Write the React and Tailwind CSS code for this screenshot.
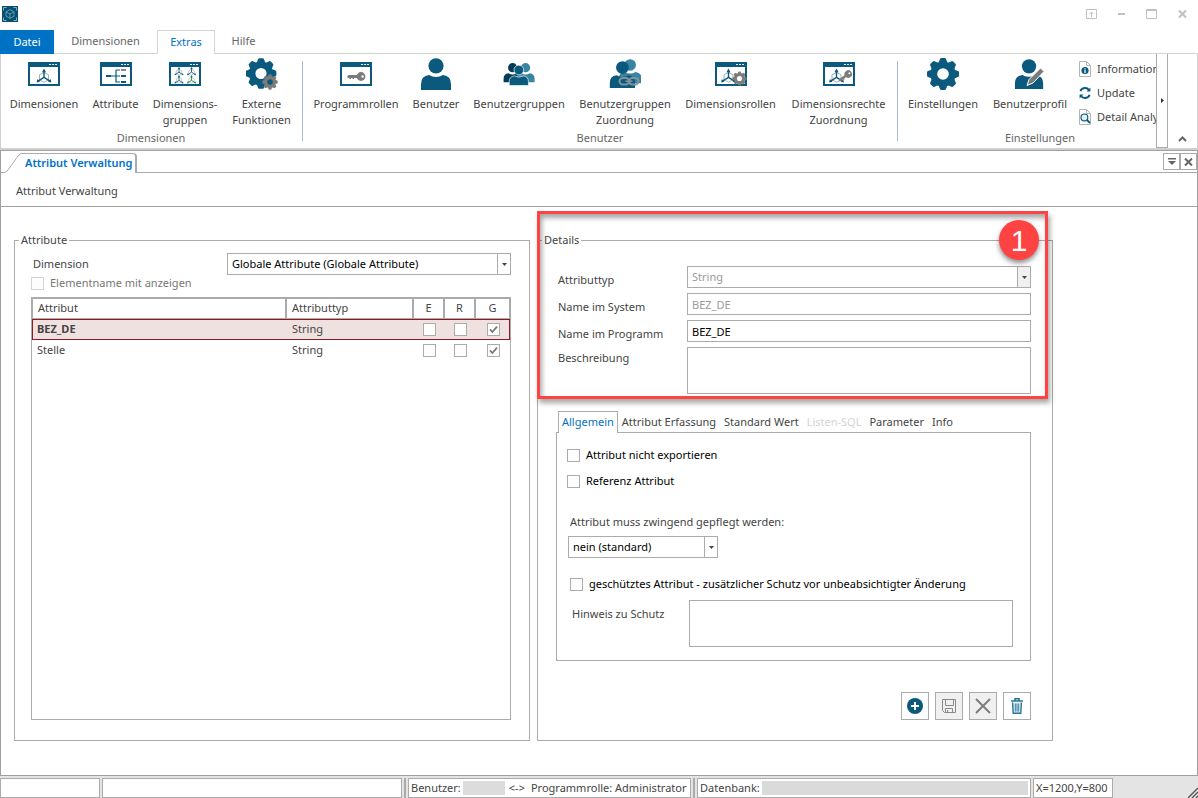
import { useState } from 'react'

const ATTRIBUTES = [
  { id: 1, name: 'BEZ_DE', type: 'String', e: false, r: false, g: true },
  { id: 2, name: 'Stelle', type: 'String', e: false, r: false, g: true },
]

const DETAIL_TABS = [
  { label: 'Allgemein' },
  { label: 'Attribut Erfassung' },
  { label: 'Standard Wert' },
  { label: 'Listen-SQL', disabled: true },
  { label: 'Parameter' },
  { label: 'Info' },
]

const TEETH = [0, 45, 90, 135, 180, 225, 270, 315]

// ---------- icons ----------

function Gear({ cx, cy, scale = 1, color = '#0b5a7e', hole = '#fff' }) {
  return (
    <g transform={`translate(${cx} ${cy}) scale(${scale})`} fill={color}>
      <circle r="12.6" />
      {TEETH.map((deg) => (
        <path key={deg} d="M-4.6 -11 L-3 -15 Q-2.7 -16 -1.6 -16 H1.6 Q2.7 -16 3 -15 L4.6 -11 Z" transform={`rotate(${deg})`} />
      ))}
      <circle r="5.8" fill={hole} />
    </g>
  )
}

function Axes({ x = 0, y = 0, scale = 1, color = '#0b5a7e' }) {
  return (
    <g transform={`translate(${x} ${y}) scale(${scale})`} fill="none">
      <path d="M0 -4 L4.5 -1.6 V3.4 L0 5.8 L-4.5 3.4 V-1.6 Z" stroke="#8c9aa0" strokeWidth="0.8" />
      <path d="M0 -6 V1 L-6 4.8 M0 1 L6 4.8" stroke={color} strokeWidth="1.4" />
      <path d="M-2 -4.2 L0 -7.8 L2 -4.2 Z M-7.4 6 L-6.6 2.6 L-4 5.4 Z M7.4 6 L6.6 2.6 L4 5.4 Z" fill={color} />
    </g>
  )
}

function Key({ x, y, rotate = 0, scale = 1 }) {
  return (
    <g transform={`translate(${x} ${y}) rotate(${rotate}) scale(${scale})`} fill="#7b7b7b">
      <path d="M-9.5 -.4 L-8.5 -1.4 H1 V1.4 H-3 V2.6 H-4.5 V1.4 H-6 V2.6 H-7.5 V1.4 H-9.5 Z" />
      <circle cx="4" cy="0" r="4.4" />
      <circle cx="5.6" cy="0" r="1.2" fill="#fff" />
    </g>
  )
}

function Icon({ children }) {
  return (
    <svg viewBox="0 0 32 32" className="h-8 w-8" aria-hidden="true">
      {children}
    </svg>
  )
}

function WindowFrame({ children }) {
  return (
    <Icon>
      <rect x="0" y="4" width="32" height="24" fill="#0b5a7e" />
      <rect x="2" y="9" width="28" height="17" fill="#fff" />
      <path d="M21 6h2v1h-2zM24 6h2v1h-2zM27 6h2v1h-2z" fill="#dfeaef" />
      {children}
    </Icon>
  )
}

function Person({ x = 0, y = 0, scale = 1, color = '#0b5a7e', outline = 'none' }) {
  return (
    <g transform={`translate(${x} ${y}) scale(${scale})`} fill={color} stroke={outline} strokeWidth="1">
      <circle cx="16" cy="7.8" r="7.6" />
      <path d="M1 32 V26 Q1 18 9 17 Q16 21 23 17 Q31 18 31 26 V32 Z" />
    </g>
  )
}

const ICONS = {
  dimension: <WindowFrame><Axes x={16} y={18.4} /></WindowFrame>,
  attribute: (
    <WindowFrame>
      <path d="M11 18H20M16 12V24.6M16 12H20M16 24H20" stroke="#0b5a7e" strokeWidth="1.2" fill="none" />
      <path d="M6 18H11M21 18H26M21 24H26" stroke="#0b5a7e" strokeWidth="2" />
      <path d="M21 12H26" stroke="#8a8a8a" strokeWidth="2" />
    </WindowFrame>
  ),
  groups: (
    <WindowFrame>
      <Axes x={10} y={13.6} scale={0.6} />
      <Axes x={22.5} y={13.6} scale={0.6} />
      <Axes x={10} y={21.8} scale={0.6} />
      <Axes x={22.5} y={21.8} scale={0.6} color="#1f7a4d" />
    </WindowFrame>
  ),
  external: (
    <Icon>
      <Gear cx={15} cy={15.5} scale={0.96} />
      <Gear cx={24} cy={24} scale={0.48} color="#7b7b7b" hole="#0b5a7e" />
    </Icon>
  ),
  key: <WindowFrame><Key x={17} y={18.5} /></WindowFrame>,
  user: <Icon><Person /></Icon>,
  users: (
    <Icon>
      <Person x={0} y={5} scale={0.6} color="#053c55" />
      <Person x={13} y={5} scale={0.6} color="#3a84a3" />
      <Person x={5.6} y={7} scale={0.64} color="#0b5a7e" outline="#fff" />
    </Icon>
  ),
  userLink: (
    <Icon>
      <Person x={9} y={1} scale={0.76} color="#3a84a3" />
      <Person x={0} y={3} scale={0.84} color="#0b5a7e" />
      <g fill="none" stroke="#84929a" strokeWidth="2">
        <rect x="10.5" y="20" width="9.5" height="6.4" rx="3.2" />
        <rect x="20" y="20" width="9.5" height="6.4" rx="3.2" />
      </g>
      <path d="M16.5 23.2H23.5" stroke="#84929a" strokeWidth="1.6" />
    </Icon>
  ),
  dimensionRoles: (
    <WindowFrame>
      <Axes x={13.5} y={18.4} />
      <Gear cx={24.5} cy={20.5} scale={0.44} color="#7b7b7b" />
    </WindowFrame>
  ),
  dimensionRights: (
    <WindowFrame>
      <Axes x={13.5} y={18.4} />
      <Key x={22.5} y={18} rotate={-35} scale={0.85} />
    </WindowFrame>
  ),
  settings: <Icon><Gear cx={16} cy={16} /></Icon>,
  profile: (
    <Icon>
      <Person x={0} y={1} scale={0.94} />
      <path d="M13 27.5 L15 21.5 L26.5 10 L30 13.5 L19 25 Z" fill="#7b7b7b" stroke="#fff" strokeWidth="1" />
    </Icon>
  ),
}

function InfoPageIcon() {
  return (
    <svg viewBox="0 0 16 16" className="h-4 w-4" aria-hidden="true">
      <path d="M2.5 .5H9.5L13.5 4.5V15.5H2.5Z" fill="#fff" stroke="#b4b4b4" />
      <path d="M9.5 .5V4.5H13.5" fill="none" stroke="#b4b4b4" />
      <circle cx="8" cy="9.5" r="3.6" fill="#0b5a7e" />
      <path d="M8 7.2v1.2M8 9v3" stroke="#fff" strokeWidth="1.2" />
    </svg>
  )
}

function RefreshIcon() {
  return (
    <svg viewBox="0 0 16 16" className="h-4 w-4" aria-hidden="true">
      <path d="M3.4 6.2 A5 5 0 0 1 12 5 M12.6 9.8 A5 5 0 0 1 4 11" fill="none" stroke="#0b5a7e" strokeWidth="2" />
      <path d="M13.4 2.6V6.6H9.6ZM2.6 13.4V9.4H6.4Z" fill="#0b5a7e" />
    </svg>
  )
}

function SearchPageIcon() {
  return (
    <svg viewBox="0 0 16 16" className="h-4 w-4" aria-hidden="true">
      <path d="M2.5 .5H9.5L13.5 4.5V15.5H2.5Z" fill="#fff" stroke="#b4b4b4" />
      <path d="M9.5 .5V4.5H13.5" fill="none" stroke="#b4b4b4" />
      <circle cx="7.4" cy="8.4" r="3.4" fill="#e3eff5" stroke="#0b5a7e" strokeWidth="1.2" />
      <path d="M10 11 L13 14" stroke="#0b5a7e" strokeWidth="1.8" />
    </svg>
  )
}

// ---------- form controls ----------

function Checkbox({ id, checked = false, disabled, label }) {
  return (
    <span className="relative inline-block h-[13px] w-[13px] shrink-0 align-middle">
      <input
        id={id}
        type="checkbox"
        aria-label={label}
        defaultChecked={checked}
        disabled={disabled}
        className="peer block h-[13px] w-[13px] appearance-none border border-[#ababab] bg-[#fdfdfd] disabled:border-[#d4d4d4]"
      />
      <svg viewBox="0 0 13 13" className="pointer-events-none absolute inset-0 hidden peer-checked:block" aria-hidden="true">
        <path d="M3 6.4 L5.4 9 L10 3.6" fill="none" stroke="#7a7a7a" strokeWidth="1.8" />
      </svg>
    </span>
  )
}

function Select({ id, options, disabled, className = '' }) {
  return (
    <div className={`flex h-[22px] border border-[#ababab] bg-white ${className}`}>
      <select
        id={id}
        disabled={disabled}
        className="min-w-0 flex-1 appearance-none bg-white pl-1 text-black outline-none disabled:text-[#9a9a9a] disabled:opacity-100"
      >
        {options.map((o) => <option key={o}>{o}</option>)}
      </select>
      <span className={`pointer-events-none flex w-[13px] items-center justify-center border-l border-[#ababab] ${disabled ? 'bg-[#f0f0f0]' : ''}`}>
        <svg viewBox="0 0 5 3" className="h-[3px] w-[5px]" aria-hidden="true"><path d="M0 0H5L2.5 3Z" fill="#444" /></svg>
      </span>
    </div>
  )
}

function RibbonButton({ icon, lines, className }) {
  return (
    <button type="button" className={`flex shrink-0 flex-col items-center gap-1.5 self-start ${className}`}>
      {ICONS[icon]}
      <span className="whitespace-nowrap leading-4">
        {lines.map((l) => <span key={l} className="block">{l}</span>)}
      </span>
    </button>
  )
}

function RibbonGroup({ title, className = '', children }) {
  return (
    <div className={`flex shrink-0 flex-col justify-between pt-1 pb-0.5 ${className}`}>
      <div className="flex">{children}</div>
      <div className="text-center leading-4 text-[#666]">{title}</div>
    </div>
  )
}

function ActionButton({ label, disabled, children }) {
  return (
    <button
      type="button"
      aria-label={label}
      disabled={disabled}
      className="flex h-7 w-7 items-center justify-center border border-[#ababab] bg-white disabled:bg-[#f0f0f0]"
    >
      <svg viewBox="0 0 16 16" className="h-4 w-4" aria-hidden="true">{children}</svg>
    </button>
  )
}

// ---------- page parts ----------

function TitleBar() {
  return (
    <header className="flex h-[30px] items-center justify-between pr-2.5 pb-0.5 pl-0.5">
      <svg viewBox="0 0 16 16" className="h-4 w-4" aria-hidden="true">
        <rect width="16" height="16" fill="#0b4f70" />
        <path d="M1.5 4.5V1.5H4.5M11.5 1.5H14.5V4.5M14.5 11.5V14.5H11.5M4.5 14.5H1.5V11.5" fill="none" stroke="#79b3c9" />
        <path d="M8 3.6 L12 5.8 V10.2 L8 12.4 L4 10.2 V5.8 Z M8 8 V12.4 M8 8 L4 5.8 M8 8 L12 5.8" fill="none" stroke="#5fa6bf" strokeWidth="0.9" />
      </svg>
      <div className="flex items-center gap-5">
        <button type="button" aria-label="Menüband">
          <svg viewBox="0 0 11 10" className="h-[10px] w-[11px]"><path d="M.5 .5H10.5V9.5H.5ZM5.5 8V3M3.5 5L5.5 3L7.5 5" fill="none" stroke="#c0c0c0" /></svg>
        </button>
        <button type="button" aria-label="Minimieren">
          <svg viewBox="0 0 9 10" className="h-[10px] w-[9px]"><path d="M1 4H8V6H1Z" fill="#c0c0c0" /></svg>
        </button>
        <button type="button" aria-label="Maximieren">
          <svg viewBox="0 0 11 10" className="h-[10px] w-[11px]"><path d="M.5 .5H10.5V9.5H.5ZM.5 1.5H10.5" fill="none" stroke="#c0c0c0" /></svg>
        </button>
        <button type="button" aria-label="Schließen">
          <svg viewBox="0 0 11 10" className="h-[10px] w-[11px]"><path d="M2 1.5L9 8.5M9 1.5L2 8.5" fill="none" stroke="#c0c0c0" strokeWidth="2" /></svg>
        </button>
      </div>
    </header>
  )
}

function RibbonTabs() {
  return (
    <nav className="flex h-6 items-stretch text-[#666]">
      <button type="button" className="w-[54px] bg-[#0072c6] text-white">Datei</button>
      <button type="button" className="w-[103px] border-b border-[#d5d5d5]">Dimensionen</button>
      <button type="button" className="w-[58px] border-x border-t border-[#d5d5d5] text-[#0072c6]">Extras</button>
      <button type="button" className="w-[57px] border-b border-[#d5d5d5]">Hilfe</button>
      <span className="flex-1 border-b border-[#d5d5d5]" />
    </nav>
  )
}

function Ribbon() {
  return (
    <div className="flex h-24 border-x border-b-2 border-[#d0d0d0]">
      <div className="flex min-w-0 flex-1 overflow-hidden">
        <RibbonGroup title="Dimensionen" className="pr-[3px] pl-0.5">
          <RibbonButton icon="dimension" lines={['Dimensionen']} className="w-[82px]" />
          <RibbonButton icon="attribute" lines={['Attribute']} className="w-[61px]" />
          <RibbonButton icon="groups" lines={['Dimensions-', 'gruppen']} className="w-[78px]" />
          <RibbonButton icon="external" lines={['Externe', 'Funktionen']} className="w-[75px]" />
        </RibbonGroup>
        <div className="my-[7px] w-px shrink-0 bg-[#a9b8d6]" />
        <RibbonGroup title="Benutzer" className="pr-[3px] pl-[3px]">
          <RibbonButton icon="key" lines={['Programmrollen']} className="w-[100px]" />
          <RibbonButton icon="user" lines={['Benutzer']} className="w-[60px]" />
          <RibbonButton icon="users" lines={['Benutzergruppen']} className="w-[106px]" />
          <RibbonButton icon="userLink" lines={['Benutzergruppen', 'Zuordnung']} className="w-[106px]" />
          <RibbonButton icon="dimensionRoles" lines={['Dimensionsrollen']} className="w-[105px]" />
          <RibbonButton icon="dimensionRights" lines={['Dimensionsrechte', 'Zuordnung']} className="w-[111px]" />
        </RibbonGroup>
        <div className="my-[7px] w-px shrink-0 bg-[#a9b8d6]" />
        <RibbonGroup title="Einstellungen" className="w-[281px] pl-[3px]">
          <RibbonButton icon="settings" lines={['Einstellungen']} className="w-[84px]" />
          <RibbonButton icon="profile" lines={['Benutzerprofil']} className="w-[90px]" />
          <div className="flex flex-col gap-2 pt-[3px] pl-0.5 whitespace-nowrap leading-4">
            <button type="button" className="flex items-center gap-1"><InfoPageIcon />Informationen</button>
            <button type="button" className="flex items-center gap-1"><RefreshIcon />Update</button>
            <button type="button" className="flex items-center gap-1"><SearchPageIcon />Detail Analyse</button>
          </div>
        </RibbonGroup>
      </div>
      <button type="button" aria-label="Weiter" className="flex w-3 items-center justify-center border-x border-b border-[#ababab]">
        <svg viewBox="0 0 3 5" className="h-[5px] w-[3px]"><path d="M0 0V5L3 2.5Z" fill="#333" /></svg>
      </button>
      <button type="button" aria-label="Menüband reduzieren" className="flex w-[29px] items-end justify-center pb-1.5">
        <svg viewBox="0 0 9 6" className="h-[6px] w-[9px]"><path d="M1 5L4.5 1.5L8 5" fill="none" stroke="#666" strokeWidth="2" /></svg>
      </button>
    </div>
  )
}

function DocumentTabs() {
  return (
    <div className="flex h-[22px] items-end">
      <span className="w-[3px] self-stretch border-b border-[#ababab]" />
      <svg viewBox="0 0 18 20" className="h-5 w-[18px]" aria-hidden="true">
        <path d="M0 19.5 Q2 19.5 4 17 L14 3 Q16 .5 18 .5" fill="none" stroke="#ababab" />
      </svg>
      <button type="button" className="h-5 rounded-tr-sm border-t border-r-2 border-[#ababab] px-[3px] font-semibold text-[#0072c6]">
        Attribut Verwaltung
      </button>
      <div className="flex flex-1 justify-end self-stretch border-b border-[#ababab] pt-0.5">
        <button type="button" aria-label="Fensterliste" className="flex h-[17px] w-[17px] items-center justify-center border border-[#ababab]">
          <svg viewBox="0 0 8 7" className="h-[7px] w-2"><path d="M0 0H8V1.6H0ZM0 3H8L4 7Z" fill="#666" /></svg>
        </button>
        <button type="button" aria-label="Tab schließen" className="flex h-[17px] w-[17px] items-center justify-center border border-[#ababab]">
          <svg viewBox="0 0 9 8" className="h-2 w-[9px]"><path d="M1 .5L8 7.5M8 .5L1 7.5" stroke="#666" strokeWidth="2" /></svg>
        </button>
      </div>
    </div>
  )
}

function AttributePanel() {
  const [selected, setSelected] = useState(1)

  return (
    <fieldset className="flex min-w-0 max-w-[516px] flex-1 flex-col border border-[#ababab] pr-[18px] pb-5 pl-4">
      <legend className="-ml-3 px-0.5 leading-4">Attribute</legend>
      <div className="mt-[5px] flex items-center">
        <label htmlFor="dimension" className="w-[196px] pl-0.5">Dimension</label>
        <Select id="dimension" options={['Globale Attribute (Globale Attribute)']} className="min-w-0 flex-1" />
      </div>
      <div className="flex h-4 items-center gap-1.5 text-[#777]">
        <Checkbox id="show-name" disabled />
        <label htmlFor="show-name">Elementname mit anzeigen</label>
      </div>

      <div className="mt-1.5 flex-1 border border-[#ababab]">
        <table className="w-full table-fixed border-separate border-spacing-0 text-left">
          <thead>
            <tr className="h-[21px]">
              <th className="border border-[#ababab] px-[5px] font-normal">Attribut</th>
              <th className="w-[127px] border border-[#ababab] px-[5px] font-normal">Attributtyp</th>
              <th className="w-[31px] border border-[#ababab] text-center font-normal">E</th>
              <th className="w-[31px] border border-[#ababab] text-center font-normal">R</th>
              <th className="w-[35px] border border-[#ababab] text-center font-normal">G</th>
            </tr>
          </thead>
          <tbody>
            {ATTRIBUTES.map((a) => (
              <tr
                key={a.id}
                onClick={() => setSelected(a.id)}
                className={selected === a.id ? 'h-[21px] bg-[#f0e1e1] outline-1 -outline-offset-1 outline-[#8e1b22]' : 'h-5'}
              >
                <td className={`px-[5px] ${selected === a.id ? 'font-bold' : ''}`}>{a.name}</td>
                <td className="px-1.5">{a.type}</td>
                <td className="pl-0.5 text-center leading-none"><Checkbox label={`${a.name} E`} checked={a.e} /></td>
                <td className="pl-0.5 text-center leading-none"><Checkbox label={`${a.name} R`} checked={a.r} /></td>
                <td className="pl-0.5 text-center leading-none"><Checkbox label={`${a.name} G`} checked={a.g} /></td>
              </tr>
            ))}
          </tbody>
        </table>
      </div>
    </fieldset>
  )
}

function DetailsPanel() {
  const [tab, setTab] = useState('Allgemein')

  return (
    <div className="relative flex min-w-0 max-w-[516px] flex-1">
      <fieldset className="min-w-0 flex-1 border border-[#ababab] pr-[21px] pb-5 pl-[18px]">
        <legend className="-ml-3.5 px-0.5 leading-4">Details</legend>

        <div className="mt-[18px] flex flex-col gap-[5px] pl-0.5">
          <div className="flex">
            <label htmlFor="type" className="w-[129px] pt-1.5 leading-4">Attributtyp</label>
            <Select id="type" disabled options={['String']} className="min-w-0 flex-1" />
          </div>
          <div className="flex">
            <label htmlFor="system-name" className="w-[129px] pt-1.5 leading-4">Name im System</label>
            <input id="system-name" disabled defaultValue="BEZ_DE" className="h-[22px] min-w-0 flex-1 border border-[#ababab] px-1 text-[#9a9a9a]" />
          </div>
          <div className="flex">
            <label htmlFor="program-name" className="w-[129px] pt-1.5 leading-4">Name im Programm</label>
            <input id="program-name" defaultValue="BEZ_DE" className="h-[22px] min-w-0 flex-1 border border-[#ababab] px-1 text-black outline-none" />
          </div>
          <div className="flex">
            <label htmlFor="description" className="w-[129px] pt-[3px] leading-4">Beschreibung</label>
            <textarea id="description" className="block h-[47px] min-w-0 flex-1 resize-none border border-[#ababab] px-1 outline-none" />
          </div>
        </div>

        <div className="mt-[17px] flex h-[21px] pl-0.5" role="tablist">
          {DETAIL_TABS.map((t) => (
            <button
              key={t.label}
              type="button"
              role="tab"
              aria-selected={tab === t.label}
              disabled={t.disabled}
              onClick={() => setTab(t.label)}
              className={`whitespace-nowrap border-x border-t px-[3px] disabled:text-[#d4d4d4] ${tab === t.label ? 'relative -mb-px border-[#ababab] bg-white text-[#0072c6]' : 'border-transparent'}`}
            >
              {t.label}
            </button>
          ))}
        </div>
        <div className="flex flex-col border border-[#ababab] pt-3.5 pr-[17px] pb-[13px] pl-2.5 text-black">
          <div className="flex h-4 items-center gap-1.5">
            <Checkbox id="no-export" />
            <label htmlFor="no-export">Attribut nicht exportieren</label>
          </div>
          <div className="mt-2.5 flex h-4 items-center gap-1.5">
            <Checkbox id="reference" />
            <label htmlFor="reference">Referenz Attribut</label>
          </div>
          <label htmlFor="required" className="mt-[25px] pl-[3px] leading-4 text-[#444]">Attribut muss zwingend gepflegt werden:</label>
          <Select id="required" options={['nein (standard)']} className="mt-1.5 ml-px w-[150px]" />
          <div className="mt-[18px] flex h-4 items-center gap-1.5 pl-[3px]">
            <Checkbox id="protected" />
            <label htmlFor="protected">geschütztes Attribut - zusätzlicher Schutz vor unbeabsichtigter Änderung</label>
          </div>
          <div className="mt-2 flex">
            <label htmlFor="hint" className="w-[122px] pt-1.5 pl-[5px] leading-4 text-[#444]">Hinweis zu Schutz</label>
            <textarea id="hint" className="block h-[47px] min-w-0 flex-1 resize-none border border-[#ababab] px-1 outline-none" />
          </div>
        </div>

        <div className="mt-[31px] flex justify-end gap-1.5">
          <ActionButton label="Neu">
            <circle cx="8" cy="8" r="8" fill="#0b5a7e" />
            <path d="M8 4V12M4 8H12" stroke="#fff" strokeWidth="2" />
          </ActionButton>
          <ActionButton label="Speichern" disabled>
            <path d="M1.5 1.5H14.5V14.5H3.5L1.5 12.5ZM4.5 1.5V7.5H12.5V1.5M4.5 14.5V10.5H11.5V14.5M6.5 12V14.5" fill="none" stroke="#8a8a8a" />
          </ActionButton>
          <ActionButton label="Abbrechen" disabled>
            <path d="M1 1L15 15M15 1L1 15" stroke="#7d7d7d" strokeWidth="2" />
          </ActionButton>
          <ActionButton label="Löschen">
            <path d="M2 3H14M6 2.6V.8H10V2.6" fill="none" stroke="#2b7596" strokeWidth="1.6" />
            <path d="M3.6 4.5L4.2 15.2H11.8L12.4 4.5" fill="#dcebf2" stroke="#2b7596" strokeWidth="1.4" />
            <path d="M6.3 5.5V13.6M8 5.5V13.6M9.7 5.5V13.6" stroke="#2b7596" strokeWidth="0.9" />
          </ActionButton>
        </div>
      </fieldset>

      {/* highlighted step */}
      <div className="pointer-events-none absolute -top-[21px] right-[5px] left-0 h-[188px] border-3 border-[#ff4343] shadow-[2px_4px_5px_rgba(0,0,0,0.35),inset_2px_4px_5px_rgba(0,0,0,0.35)]" />
      <span className="absolute -top-3 right-3.5 flex h-10 w-10 items-center justify-center rounded-full bg-[#ff4343] font-['Liberation_Sans',sans-serif] text-[30px] text-white shadow-[0_3px_5px_rgba(0,0,0,0.45)]">1</span>
    </div>
  )
}

function StatusBar() {
  return (
    <footer className="flex h-[22px] items-stretch bg-[#e4e4e4] pt-0.5 whitespace-nowrap">
      <div className="w-[100px] border border-[#ababab] bg-white" />
      <div className="ml-0.5 w-[300px] border border-[#ababab] bg-white" />
      <div className="mx-0.5 w-0.5 bg-[#ababab]" />
      <div className="flex w-[283px] items-center border border-[#ababab] bg-white pl-0.5">
        Benutzer:
        <span className="ml-0.5 h-[14px] w-[42px] shrink-0 bg-[#dcdcdc]" />
        <span className="ml-1">&lt;-&gt;</span>
        <span className="ml-1.5">Programmrolle: Administrator</span>
      </div>
      <div className="mx-0.5 w-0.5 bg-[#ababab]" />
      <div className="flex w-[334px] items-center border border-[#ababab] bg-white px-0.5">
        Datenbank:
        <span className="ml-0.5 h-[14px] flex-1 bg-[#dadada]" />
      </div>
      <div className="ml-0.5 flex w-20 items-center border border-[#ababab] bg-white pl-0.5">X=1200,Y=800</div>
      <div className="flex flex-1 items-end justify-end">
        <svg viewBox="0 0 10 10" className="h-[10px] w-[10px]" aria-hidden="true"><path d="M0 10L10 0M4 10L10 4M8 10L10 8" stroke="#555" strokeWidth="1.4" /></svg>
      </div>
    </footer>
  )
}

export default function App() {
  return (
    <div className="flex min-h-screen flex-col bg-white font-['Noto_Sans',sans-serif] text-[11px] text-[#444]">
      <TitleBar />
      <RibbonTabs />
      <Ribbon />
      <main className="flex flex-1 flex-col border border-[#a0a0a0]">
        <DocumentTabs />
        <h1 className="flex h-[34px] items-center border-b border-[#a0a0a0] px-[15px] pt-[3px]">Attribut Verwaltung</h1>
        <div className="flex gap-[7px] px-[13px] pt-[25px] pb-[34px]">
          <AttributePanel />
          <DetailsPanel />
        </div>
      </main>
      <StatusBar />
    </div>
  )
}
